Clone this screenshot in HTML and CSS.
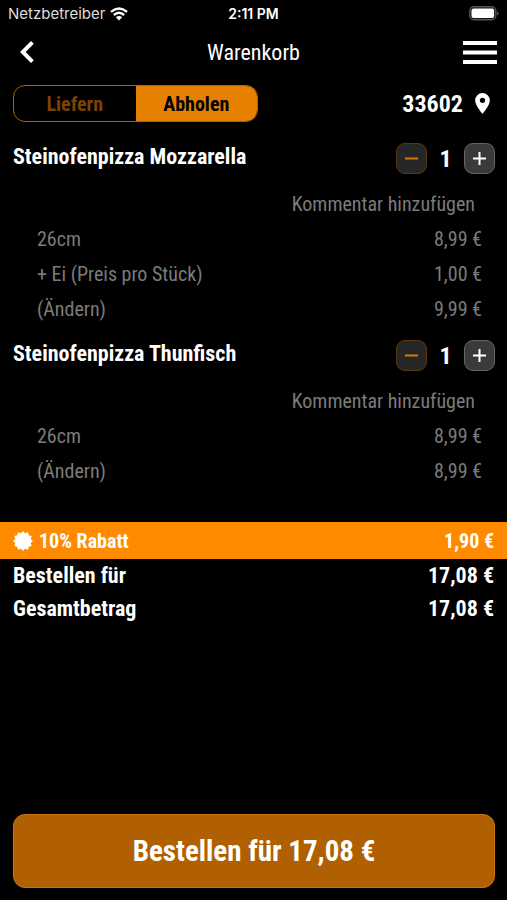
FILE: index.html
```html
<!DOCTYPE html>
<html lang="de">

<head>
    <meta charset="UTF-8">
    <meta name="viewport" content="width=device-width, initial-scale=1.0">
    <title>Warenkorb</title>
    <link rel="stylesheet" href="styles.css">
</head>

<body>
    <div class="status">
        <div class="carrier">
            <span>Netzbetreiber</span>
            <svg width="18" height="14" viewBox="0 0 18 14" fill="none" stroke="#fff" stroke-width="2.4">
                <path d="M1 4.8Q9-2 17 4.8M3.8 8Q9 3.6 14.2 8" />
                <path d="M9 13.6L5.8 10.3Q9 7.6 12.2 10.3Z" fill="#fff" stroke="none" />
            </svg>
        </div>
        <div class="time">2:11 PM</div>
        <div class="battery">
            <svg width="30" height="15" viewBox="0 0 30 15">
                <rect x=".8" y=".8" width="26" height="13" rx="4" fill="#111" stroke="#555" stroke-width="1.4" />
                <rect x="2.5" y="2.5" width="22.6" height="9.6" rx="2" fill="#fff" />
                <path d="M28 5Q31 7.3 28 9.6Z" fill="#555" />
            </svg>
        </div>
    </div>

    <header class="header">
        <button type="button" class="back" aria-label="Zurück">
            <svg width="14" height="22" viewBox="0 0 14 22" fill="none" stroke="#fff" stroke-width="4">
                <path d="M12.4 1.4L2.8 11L12.4 20.6" />
            </svg>
        </button>
        <h1>Warenkorb</h1>
        <button type="button" class="menu" aria-label="Menü">
            <svg width="34" height="23" viewBox="0 0 34 23" fill="#fff">
                <path d="M0 0H34V4H0ZM0 9.5H34V13.5H0ZM0 19H34V23H0Z" />
            </svg>
        </button>
    </header>

    <main>
        <div class="options">
            <div class="switch">
                <button type="button">Liefern</button>
                <button type="button" class="active">Abholen</button>
            </div>
            <a href="#" class="zip">
                <span>33602</span>
                <svg width="15" height="21" viewBox="0 0 14 20" fill="#fff" fill-rule="evenodd">
                    <path d="M7 0a7 7 0 0 0-7 7c0 5.2 7 13 7 13s7-7.8 7-13a7 7 0 0 0-7-7zm0 9.500a2.500 2.500 0 1 1 0-5 2.500 2.500 0 0 1 0 5z" />
                </svg>
            </a>
        </div>

        <section class="item">
            <div class="item-head">
                <h2>Steinofenpizza Mozzarella</h2>
                <div class="amount">
                    <button type="button" class="minus" aria-label="Weniger">
                        <svg width="13" height="13" viewBox="0 0 13 13" stroke="#d97800" stroke-width="2"><path d="M0 6.5H13" /></svg>
                    </button>
                    <span>1</span>
                    <button type="button" class="plus" aria-label="Mehr">
                        <svg width="13" height="13" viewBox="0 0 13 13" stroke="#fff" stroke-width="2"><path d="M0 6.5H13M6.5 0V13" /></svg>
                    </button>
                </div>
            </div>
            <a href="#" class="comment">Kommentar hinzufügen</a>
            <div class="row"><span>26cm</span><span>8,99 €</span></div>
            <div class="row"><span>+ Ei (Preis pro Stück)</span><span>1,00 €</span></div>
            <div class="row"><a href="#">(Ändern)</a><span>9,99 €</span></div>
        </section>

        <section class="item">
            <div class="item-head">
                <h2>Steinofenpizza Thunfisch</h2>
                <div class="amount">
                    <button type="button" class="minus" aria-label="Weniger">
                        <svg width="13" height="13" viewBox="0 0 13 13" stroke="#d97800" stroke-width="2"><path d="M0 6.5H13" /></svg>
                    </button>
                    <span>1</span>
                    <button type="button" class="plus" aria-label="Mehr">
                        <svg width="13" height="13" viewBox="0 0 13 13" stroke="#fff" stroke-width="2"><path d="M0 6.5H13M6.5 0V13" /></svg>
                    </button>
                </div>
            </div>
            <a href="#" class="comment">Kommentar hinzufügen</a>
            <div class="row"><span>26cm</span><span>8,99 €</span></div>
            <div class="row"><a href="#">(Ändern)</a><span>8,99 €</span></div>
        </section>

        <div class="discount">
            <svg width="20" height="20" viewBox="-10 -10 20 20" fill="#fff">
                <path d="M0-10L2-7.700L5-8.700L5.700-5.700L8.700-5L7.700-2L10 0L7.700 2L8.700 5L5.700 5.700L5 8.700L2 7.700L0 10L-2 7.700L-5 8.700L-5.700 5.700L-8.700 5L-7.700 2L-10 0L-7.700-2L-8.700-5L-5.700-5.700L-5-8.700L-2-7.700Z" />
            </svg>
            <span>10% Rabatt</span>
            <span class="price">1,90 €</span>
        </div>
        <div class="total"><span>Bestellen für</span><span>17,08 €</span></div>
        <div class="total"><span>Gesamtbetrag</span><span>17,08 €</span></div>
    </main>

    <footer>
        <button type="button" class="order">Bestellen für 17,08 €</button>
    </footer>
</body>

</html>
```
FILE: styles.css
```css
* {
    box-sizing: border-box;
}

body {
    margin: 0;
    min-height: 100vh;
    display: flex;
    flex-direction: column;
    background-color: #000;
    color: #fff;
    font-family: "Roboto Condensed", Roboto, sans-serif;
    font-size: 20px;
}

button {
    margin: 0;
    padding: 0;
    border: none;
    background: none;
    color: inherit;
    font: inherit;
    cursor: pointer;
}

a {
    color: inherit;
    text-decoration: none;
}

svg {
    display: block;
}

h1,
h2 {
    margin: 0;
}

/* status bar */
.status {
    display: grid;
    grid-template-columns: 1fr auto 1fr;
    align-items: center;
    height: 27px;
    padding: 0 8px;
    font-family: Inter, sans-serif;
    font-size: 15px;
}

.carrier {
    display: flex;
    align-items: center;
    gap: 5px;
    color: #ddd;
}

.time {
    font-size: 14px;
    font-weight: 600;
}

.battery {
    justify-self: end;
}

/* header */
.header {
    display: grid;
    grid-template-columns: 1fr auto 1fr;
    align-items: center;
    height: 50px;
    padding: 0 10px;
}

.header h1 {
    font-size: 22px;
    font-weight: 400;
}

.back {
    justify-self: start;
    padding: 0 10px;
}

.menu {
    justify-self: end;
}

/* delivery or pickup */
.options {
    display: flex;
    justify-content: space-between;
    align-items: center;
    padding: 8px 17px 21px 13px;
}

.switch {
    display: flex;
    width: 245px;
    height: 37px;
    border: 1px solid #b06000;
    border-radius: 12px;
    overflow: hidden;
}

.switch button {
    flex: 1;
    color: #7a4300;
    font-weight: 700;
}

.switch .active {
    background-color: #e68000;
    color: #000;
}

.zip {
    display: flex;
    align-items: center;
    gap: 12px;
    font-size: 24px;
    font-weight: 700;
}

/* cart items */
.item {
    padding: 0 12px 13px 13px;
}

.item-head {
    display: flex;
    justify-content: space-between;
    height: 31px;
    margin-bottom: 13px;
}

.item h2 {
    font-size: 22px;
    line-height: 27px;
}

.amount {
    display: flex;
    align-items: center;
    font-size: 24px;
    font-weight: 700;
}

.amount span {
    width: 37px;
    text-align: center;
}

.amount button {
    display: flex;
    justify-content: center;
    align-items: center;
    width: 31px;
    height: 31px;
    border: 1px solid #666;
    border-radius: 9px;
    background-color: #3a3a3a;
}

.amount .minus {
    border-color: #5c3810;
    background-color: #262626;
}

.comment,
.row {
    display: flex;
    justify-content: space-between;
    height: 35px;
    line-height: 35px;
    color: #7b7b7b;
}

.comment {
    justify-content: flex-end;
    padding-right: 20px;
}

.row {
    padding: 0 13px 0 24px;
}

/* sums */
.discount {
    display: flex;
    align-items: center;
    gap: 6px;
    height: 37px;
    margin-top: 20px;
    padding: 0 13px;
    background-color: #ff8a00;
    font-weight: 700;
}

.price {
    margin-left: auto;
}

.total {
    display: flex;
    justify-content: space-between;
    padding: 0 13px;
    font-size: 22px;
    font-weight: 700;
    line-height: 33px;
}

footer {
    margin-top: auto;
    padding: 12px 12px 12px 13px;
}

.order {
    width: 100%;
    height: 74px;
    border: 1px solid #c87410;
    border-radius: 12px;
    background-color: #b06000;
    font-size: 29px;
    font-weight: 700;
}
```
